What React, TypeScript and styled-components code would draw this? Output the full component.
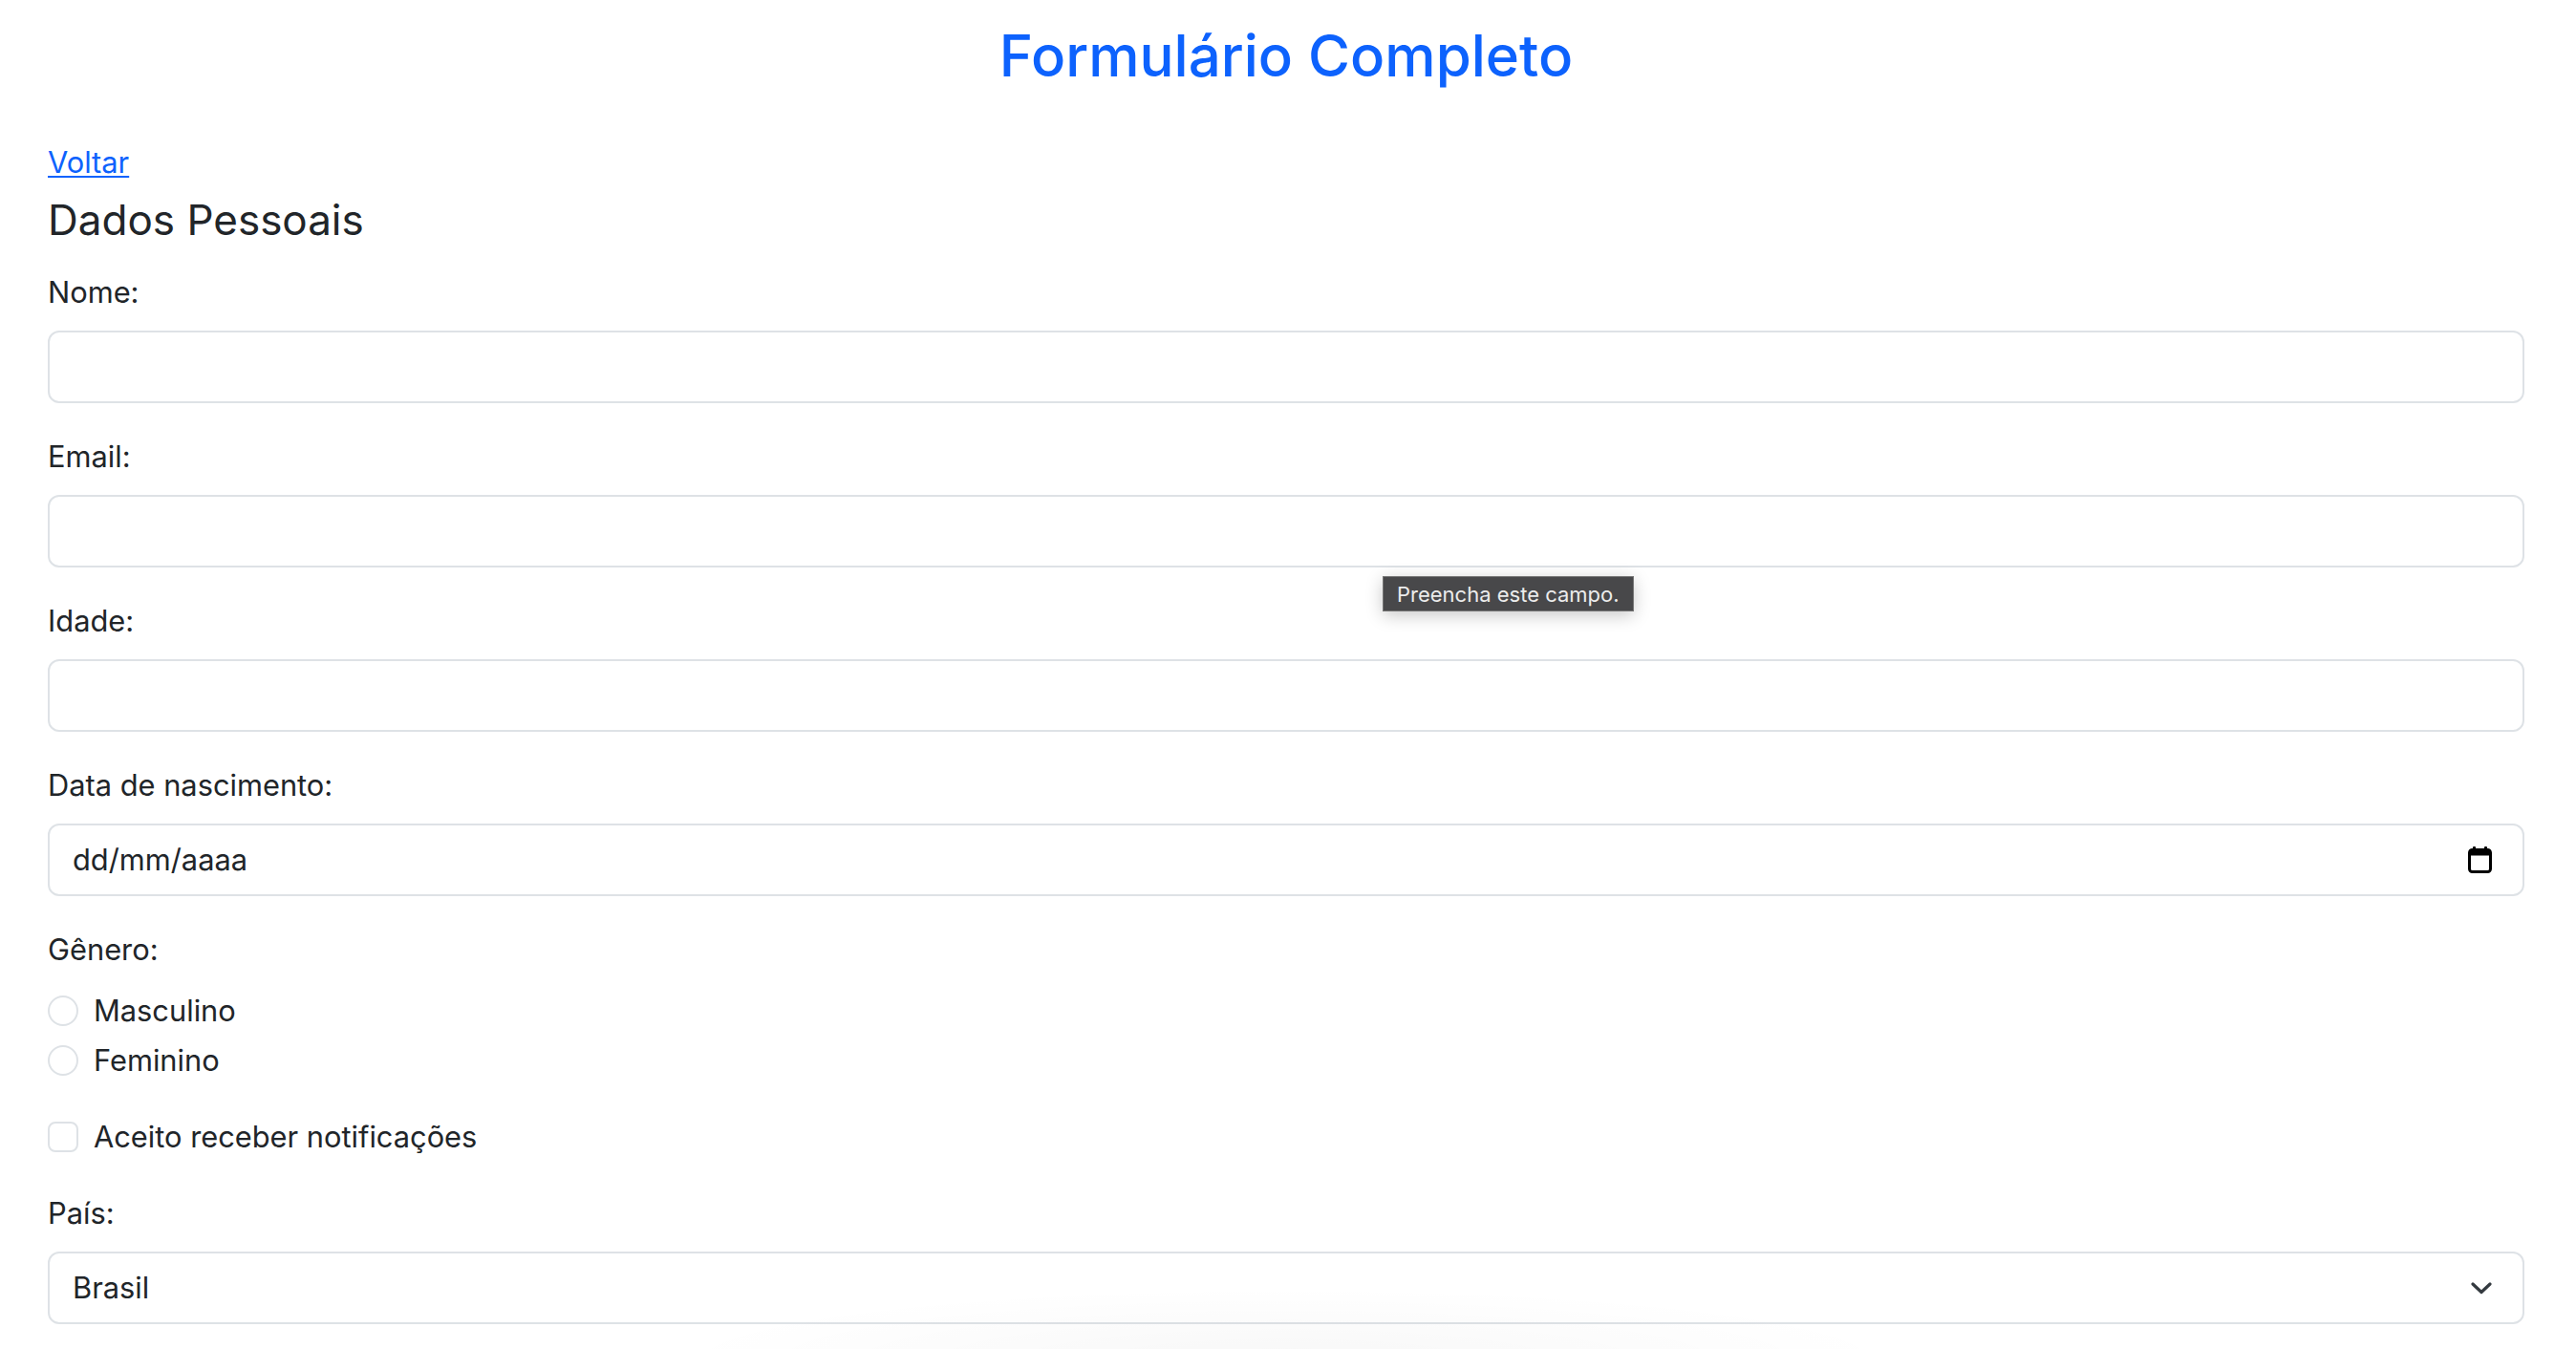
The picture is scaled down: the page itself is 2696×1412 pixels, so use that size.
import React from "react";
import styled, { createGlobalStyle } from "styled-components";

const GlobalStyle = createGlobalStyle`
  html, body {
    margin: 0;
    padding: 0;
    background: #ffffff;
  }
  body {
    font-family: Inter, "Noto Sans", "Liberation Sans", sans-serif;
    color: #212529;
    font-size: 30.8px;
    line-height: 48px;
  }
  * { box-sizing: border-box; }
`;

const Page = styled.main`
  padding: 20px 54px 0 50px;
  overflow: hidden;
  height: 1412px;
`;

const Title = styled.h1`
  margin: 0;
  text-align: center;
  font-size: 60px;
  line-height: 77px;
  font-weight: 500;
  color: #0d62fd;
`;

const BackRow = styled.div`
  margin-top: 49px;
  line-height: 48px;
`;

const BackLink = styled.a`
  color: #0d62fd;
  text-decoration: underline;
  text-underline-offset: 3px;
  text-decoration-thickness: 2px;
`;

const SectionTitle = styled.h2`
  margin: 7px 0 23px;
  font-size: 44px;
  line-height: 58px;
  font-weight: 400;
`;

const Field = styled.div`
  position: relative;
  margin-bottom: 32px;
`;

const FieldLabel = styled.label`
  display: block;
  margin-bottom: 16px;
  line-height: 48px;
`;

const ControlBox = styled.div`
  position: relative;
  display: flex;
  align-items: center;
  height: 76px;
  border: 2px solid #dee2e6;
  border-radius: 12px;
  background: #fff;
  padding: 0 32px 0 24px;
`;

const TextInput = styled.input`
  display: block;
  width: 100%;
  height: 76px;
  border: 2px solid #dee2e6;
  border-radius: 12px;
  padding: 0 24px;
  font: inherit;
  color: #212529;
  background: #fff;
  outline: none;
`;

const InnerInput = styled.input`
  flex: 1;
  border: none;
  outline: none;
  padding: 0;
  font: inherit;
  color: #212529;
  background: transparent;
  &::placeholder {
    color: #212529;
    opacity: 1;
  }
`;

const InnerSelect = styled.select`
  flex: 1;
  appearance: none;
  border: none;
  outline: none;
  padding: 0;
  font: inherit;
  color: #212529;
  background: transparent;
`;

const InputWrap = styled.div`
  position: relative;
`;

const Bubble = styled.div`
  position: absolute;
  left: 1397px;
  top: calc(100% + 9px);
  height: 37px;
  padding: 0 14px;
  display: flex;
  align-items: center;
  background: #48484a;
  border: 1px solid #767676;
  color: #ececec;
  font-size: 22px;
  line-height: 1;
  white-space: nowrap;
  box-shadow: 0 4px 18px rgba(0, 0, 0, 0.22);
  z-index: 5;
`;

const CheckRow = styled.div<{ $last?: boolean }>`
  display: flex;
  align-items: flex-start;
  gap: 16px;
  min-height: 48px;
  margin-bottom: ${(p) => (p.$last ? "0" : "4px")};
`;

const Radio = styled.input.attrs({ type: "radio" })`
  appearance: none;
  margin: 8px 0 0;
  width: 32px;
  height: 32px;
  flex: none;
  border: 2px solid #dee2e6;
  border-radius: 50%;
  background: #fff;
`;

const Checkbox = styled.input.attrs({ type: "checkbox" })`
  appearance: none;
  margin: 8px 0 0;
  width: 32px;
  height: 32px;
  flex: none;
  border: 2px solid #dee2e6;
  border-radius: 8px;
  background: #fff;
`;

const CheckLabel = styled.label`
  line-height: 48px;
`;

const Group = styled.div`
  margin-bottom: 32px;
`;

const SelectField = styled(Field)`
  &::after {
    content: "";
    position: absolute;
    left: 50%;
    transform: translateX(-50%);
    width: 1320px;
    top: calc(100% - 40px);
    height: 80px;
    background: radial-gradient(ellipse at 50% 100%, rgba(0, 0, 0, 0.03), rgba(0, 0, 0, 0) 70%);
    pointer-events: none;
  }
`;

const CalendarIcon = () => (
  <svg width="25" height="28" viewBox="0 0 25 28" aria-hidden="true">
    <rect x="5" y="0" width="3" height="5" rx="1" fill="#000" />
    <rect x="17" y="0" width="3" height="5" rx="1" fill="#000" />
    <rect x="1.5" y="3.5" width="22" height="23" rx="3" fill="none" stroke="#000" strokeWidth="3" />
    <rect x="1.5" y="3.5" width="22" height="6" fill="#000" />
  </svg>
);

const ChevronIcon = () => (
  <svg width="22" height="13" viewBox="0 0 22 13" aria-hidden="true">
    <path d="M2 2 L11 10.5 L20 2" fill="none" stroke="#343a40" strokeWidth="3.2" strokeLinecap="round" strokeLinejoin="round" />
  </svg>
);

export default function App() {
  return (
    <>
      <GlobalStyle />
      <Page>
        <Title>Formulário Completo</Title>
        <BackRow>
          <BackLink href="#">Voltar</BackLink>
        </BackRow>
        <SectionTitle>Dados Pessoais</SectionTitle>

        <Field>
          <FieldLabel htmlFor="nome">Nome:</FieldLabel>
          <TextInput id="nome" type="text" />
        </Field>

        <Field>
          <FieldLabel htmlFor="email">Email:</FieldLabel>
          <InputWrap>
            <TextInput id="email" type="text" />
            <Bubble>Preencha este campo.</Bubble>
          </InputWrap>
        </Field>

        <Field>
          <FieldLabel htmlFor="idade">Idade:</FieldLabel>
          <TextInput id="idade" type="text" />
        </Field>

        <Field>
          <FieldLabel htmlFor="nasc">Data de nascimento:</FieldLabel>
          <ControlBox>
            <InnerInput id="nasc" type="text" placeholder="dd/mm/aaaa" />
            <CalendarIcon />
          </ControlBox>
        </Field>

        <Group>
          <FieldLabel>Gênero:</FieldLabel>
          <CheckRow>
            <Radio id="masc" name="genero" />
            <CheckLabel htmlFor="masc">Masculino</CheckLabel>
          </CheckRow>
          <CheckRow $last>
            <Radio id="fem" name="genero" />
            <CheckLabel htmlFor="fem">Feminino</CheckLabel>
          </CheckRow>
        </Group>

        <Group>
          <CheckRow $last>
            <Checkbox id="notif" />
            <CheckLabel htmlFor="notif">Aceito receber notificações</CheckLabel>
          </CheckRow>
        </Group>

        <SelectField>
          <FieldLabel htmlFor="pais">País:</FieldLabel>
          <ControlBox>
            <InnerSelect id="pais" defaultValue="Brasil">
              <option>Brasil</option>
              <option>Portugal</option>
              <option>Angola</option>
            </InnerSelect>
            <ChevronIcon />
          </ControlBox>
        </SelectField>
      </Page>
    </>
  );
}
